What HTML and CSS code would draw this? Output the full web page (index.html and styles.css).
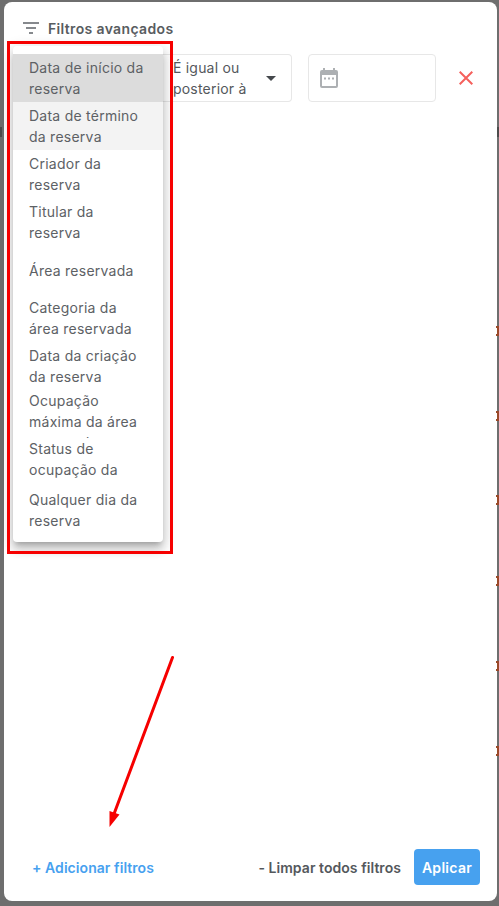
FILE: index.html
```html
<!DOCTYPE html>
<html lang="en">
<head>
<meta charset="UTF-8">
<title>Filtros avançados</title>
<link rel="stylesheet" href="styles.css">
</head>
<body>

<!-- page behind the dialog, only its edge shows -->
<span class="peek peek-left"></span>
<span class="peek peek-right"></span>
<span class="mark mark-1"></span>
<span class="mark mark-2"></span>
<span class="mark mark-3"></span>
<span class="mark mark-4"></span>
<span class="mark mark-5"></span>
<span class="mark mark-6"></span>

<div class="dialog">
  <div class="dialog-head">
    <svg class="filter-icon" viewBox="0 0 16 12" width="16" height="12"><path d="M0 1h16M3 6h10M6 11h4" stroke="#5f6368" stroke-width="1.7" fill="none"/></svg>
    <span class="dialog-title">Filtros avançados</span>
  </div>

  <div class="filter-row">
    <div class="select-box">
      <div class="select-text">É igual ou<br>posterior à</div>
      <span class="caret"></span>
    </div>
    <div class="date-box">
      <svg viewBox="0 0 18 20" width="18" height="20"><path d="M3 0h2v2h8V0h2v2h1a2 2 0 0 1 2 2v14a2 2 0 0 1-2 2H2a2 2 0 0 1-2-2V4a2 2 0 0 1 2-2h1zM2 7v11h14V7z" fill="#adb0b3"/><path d="M4 9.500h2v2H4zM8 9.500h2v2H8zM12 9.500h2v2h-2z" fill="#adb0b3"/></svg>
    </div>
    <svg class="remove-icon" viewBox="0 0 14 14" width="14" height="14"><path d="M.7.700l12.600 12.600M13.300.700L.7 13.300" stroke="#f5605c" stroke-width="2" fill="none"/></svg>
  </div>

  <div class="dialog-foot">
    <a class="add-link">+ Adicionar filtros</a>
    <div class="foot-right">
      <a class="clear-link">- Limpar todos filtros</a>
      <button class="apply-btn">Aplicar</button>
    </div>
  </div>
</div>

<!-- open dropdown -->
<ul class="menu">
  <li class="menu-item selected"><span>Data de início da reserva</span></li>
  <li class="menu-item hovered"><span>Data de término da reserva</span></li>
  <li class="menu-item"><span>Criador da reserva</span></li>
  <li class="menu-item"><span>Titular da reserva</span></li>
  <li class="menu-item"><span>Área reservada</span></li>
  <li class="menu-item"><span>Categoria da área reservada</span></li>
  <li class="menu-item"><span>Data da criação da reserva</span></li>
  <li class="menu-item"><span>Ocupação máxima da área reservada</span></li>
  <li class="menu-item"><span>Status de ocupação da reserva</span></li>
  <li class="menu-item"><span>Qualquer dia da reserva</span></li>
</ul>

<!-- red annotations on top of the screenshot -->
<div class="red-box"></div>
<svg class="red-arrow" viewBox="0 0 499 906" width="499" height="906">
  <path d="M172.500 657.500L114 814" stroke="#f60000" stroke-width="3" stroke-linecap="round" fill="none"/>
  <path d="M109.500 827L109.500 811L119.500 814.500z" fill="#f60000"/>
</svg>

</body>
</html>
```
FILE: styles.css
```css
*{margin:0;padding:0;box-sizing:border-box}

:root{
  --text:#54585c;
  --blue:#47a1ef;
  --line:#e7e7e7;
}

body{
  width:499px;
  height:906px;
  overflow:hidden;
  position:relative;
  background:#6e6e6e;
  font-family:Inter,"Liberation Sans",sans-serif;
  color:var(--text);
  padding:2px 2px 5px 4px;
  display:flex;
}

/* -------- DIALOG -------- */
.dialog{
  flex:1;
  background:#fff;
  border-radius:8px;
  display:flex;
  flex-direction:column;
  padding:0 17px 16px 0;
}
.dialog-head{
  display:flex;
  align-items:center;
  gap:9px;
  padding:16px 0 0 19px;
  height:36px;
}
.dialog-title{font-size:14px;font-weight:600;letter-spacing:.35px;color:#585c60}

.filter-row{
  display:flex;
  align-items:center;
  margin-top:16px;
  padding-left:155px;
}
.select-box{
  width:133px;
  height:48px;
  border:1px solid var(--line);
  border-left:none;
  border-radius:0 4px 4px 0;
  display:flex;
  align-items:center;
  justify-content:space-between;
  padding:0 15px 0 14px;
  font-size:14px;
  line-height:21px;
  letter-spacing:.2px;
}
.caret{
  border-left:5px solid transparent;
  border-right:5px solid transparent;
  border-top:5px solid #45484c;
}
.date-box{
  width:128px;
  height:48px;
  margin-left:16px;
  border:1px solid var(--line);
  border-radius:4px;
  display:flex;
  align-items:center;
  padding-left:11px;
}
.remove-icon{margin-left:23px}

.dialog-foot{
  margin-top:auto;
  display:flex;
  align-items:center;
  justify-content:space-between;
  padding-left:28px;
}
.add-link{font-size:14px;font-weight:600;letter-spacing:.06px;color:var(--blue)}
.foot-right{display:flex;align-items:center;gap:13px}
.clear-link{font-size:14px;font-weight:600;letter-spacing:.05px;color:#54585c}
.apply-btn{
  width:66px;
  height:36px;
  border:none;
  border-radius:4px;
  background:var(--blue);
  color:#fff;
  font:600 14px Inter,"Liberation Sans",sans-serif;
  letter-spacing:.3px;
}

/* -------- MENU -------- */
.menu{
  position:absolute;
  left:13px;
  top:46px;
  width:150px;
  padding:8px 0;
  list-style:none;
  background:#fff;
  border-radius:4px;
  box-shadow:0 5px 5px -3px rgba(0,0,0,.2),0 8px 10px 1px rgba(0,0,0,.14),0 3px 14px 2px rgba(0,0,0,.12);
}
.menu-item{
  height:48px;
  padding:0 16px;
  overflow:hidden;
  display:flex;
  align-items:safe center;
  font-size:14px;
  line-height:21px;
  letter-spacing:.25px;
  color:#5d6165;
}
.selected{background:#dcdcdc}
.hovered{background:#f3f3f3}

/* -------- ANNOTATIONS -------- */
.red-box{
  position:absolute;
  left:7px;
  top:41px;
  width:166px;
  height:513px;
  border:3px solid #f60000;
}
.red-arrow{position:absolute;left:0;top:0}

/* -------- PAGE BEHIND -------- */
.peek{position:absolute;top:127px;width:2px;height:10px;background:#4c4c4c}
.peek-left{left:0}
.peek-right{right:0}
.mark{
  position:absolute;
  right:0;
  width:3px;
  height:10px;
  border:2px solid #9a4a2a;
  border-left:none;
}
.mark-1{top:326px}
.mark-2{top:411px}
.mark-3{top:495px}
.mark-4{top:576px}
.mark-5{top:661px}
.mark-6{top:746px}
```
